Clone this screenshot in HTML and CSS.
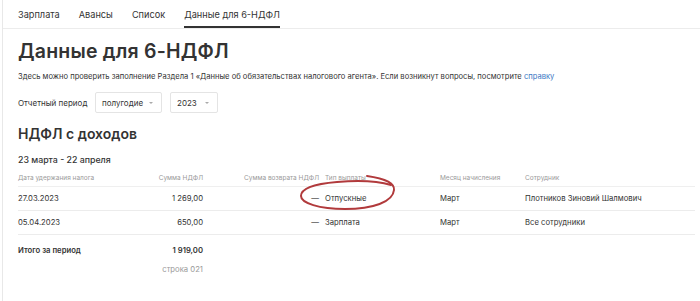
FILE: index.html
```html
<!DOCTYPE html>
<html lang="ru">
<head>
  <meta charset="UTF-8" />
  <title>Данные для 6-НДФЛ</title>
  <link rel="stylesheet" href="styles.css">
</head>
<body>
  <div class="page">
    <!-- Tabs -->
    <div class="tabs">
      <a class="tab">Зарплата</a>
      <a class="tab">Авансы</a>
      <a class="tab">Список</a>
      <a class="tab active">Данные для 6-НДФЛ</a>
    </div>

    <div class="content">
      <h1>Данные для 6-НДФЛ</h1>
      <p class="hint">Здесь можно проверить заполнение Раздела 1 «Данные об обязательствах налогового агента». Если возникнут вопросы, посмотрите <a href="#" class="link">справку</a></p>

      <div class="period">
        <span class="period-label">Отчетный период</span>
        <div class="select wide">полугодие <span class="caret"></span></div>
        <div class="select">2023 <span class="caret"></span></div>
      </div>

      <h2>НДФЛ с доходов</h2>
      <h3>23 марта - 22 апреля</h3>

      <div class="grid">
        <div class="row head">
          <div>Дата удержания налога</div>
          <div class="num">Сумма НДФЛ</div>
          <div class="num">Сумма возврата НДФЛ</div>
          <div class="pl">Тип выплаты</div>
          <div>Месяц начисления</div>
          <div>Сотрудник</div>
        </div>
        <div class="row line">
          <div>27.03.2023</div>
          <div class="num">1 269,00</div>
          <div class="num">—</div>
          <div class="pl">Отпускные</div>
          <div>Март</div>
          <div>Плотников Зиновий Шалмович</div>
        </div>
        <div class="row line">
          <div>05.04.2023</div>
          <div class="num">650,00</div>
          <div class="num">—</div>
          <div class="pl">Зарплата</div>
          <div>Март</div>
          <div>Все сотрудники</div>
        </div>
        <div class="row total">
          <div>Итого за период</div>
          <div class="num">1 919,00</div>
        </div>
        <div class="row note">
          <div></div>
          <div class="num">строка 021</div>
        </div>

        <!-- hand-drawn mark -->
        <svg class="mark" width="120" height="44" viewBox="0 0 120 44">
          <path d="M86 6 C 100 8, 114 12, 113 20 C 112 32, 92 39, 64 39 C 38 39, 20 33, 20 26 C 20 19, 32 14, 56 12 C 80 10, 100 12, 110 15" fill="none" stroke="#b13a3c" stroke-width="2" stroke-linecap="round"/>
        </svg>
      </div>
    </div>
  </div>
</body>
</html>
```

FILE: styles.css
```css
/* Page */
body {
  margin: 0;
  font-family: Inter, "Noto Sans", sans-serif;
  color: #333333;
  background: #ffffff;
}

.page {
  margin-left: 2px;
  border-left: 1px solid #e8e8e8;
  min-height: 301px;
}

/* Tabs */
.tabs {
  display: flex;
  gap: 19px;
  padding-left: 15px;
  height: 28px;
  border-bottom: 1px solid #ececec;
}

.tab {
  font-size: 9.2px;
  color: #333333;
  padding-top: 4px;
  line-height: 22px;
  border-bottom: 2px solid transparent;
}

.tab.active {
  border-bottom-color: #333333;
}

.content {
  padding: 0 5px 0 15px;
}

h1 {
  font-size: 19.5px;
  font-weight: 600;
  margin: 10px 0 0;
  line-height: 24px;
  letter-spacing: 0.2px;
}

.hint {
  font-size: 7.6px;
  margin: 8px 0 0;
  line-height: 12px;
}

.link {
  color: #3b78c4;
  text-decoration: none;
}

/* Period selects */
.period {
  display: flex;
  align-items: center;
  margin-top: 9px;
  height: 21px;
}

.period-label {
  font-size: 8px;
  width: 77px;
}

.select {
  display: flex;
  align-items: center;
  justify-content: space-between;
  box-sizing: border-box;
  width: 48px;
  height: 21px;
  border: 1px solid #e4e4e4;
  border-radius: 2px;
  padding: 0 8px 0 6px;
  margin-right: 8px;
  font-size: 8px;
}

.select.wide {
  width: 67px;
}

.caret {
  width: 0;
  height: 0;
  border-left: 2.5px solid transparent;
  border-right: 2.5px solid transparent;
  border-top: 2.5px solid #aaaaaa;
}

h2 {
  font-size: 14px;
  font-weight: 600;
  margin: 11px 0 0;
  line-height: 20px;
}

h3 {
  font-size: 8.8px;
  font-weight: 500;
  margin: 9px 0 0;
  line-height: 14px;
}

/* Table */
.grid {
  position: relative;
  margin-top: 3px;
}

.row {
  display: grid;
  grid-template-columns: 120px 65px 116px 121px 85px 1fr;
  align-items: center;
  font-size: 7.7px;
}

.row.head {
  font-size: 6.5px;
  color: #9a9a9a;
  height: 16px;
  border-bottom: 1px solid #efefef;
}

.row.line {
  height: 23px;
  border-bottom: 1px solid #ececec;
}

.row.total {
  height: 30px;
  font-weight: 600;
}

.row.note {
  height: 8px;
  color: #9a9a9a;
}

.num {
  text-align: right;
}

.pl {
  padding-left: 6px;
}

.mark {
  position: absolute;
  left: 263px;
  top: 0;
}
```
